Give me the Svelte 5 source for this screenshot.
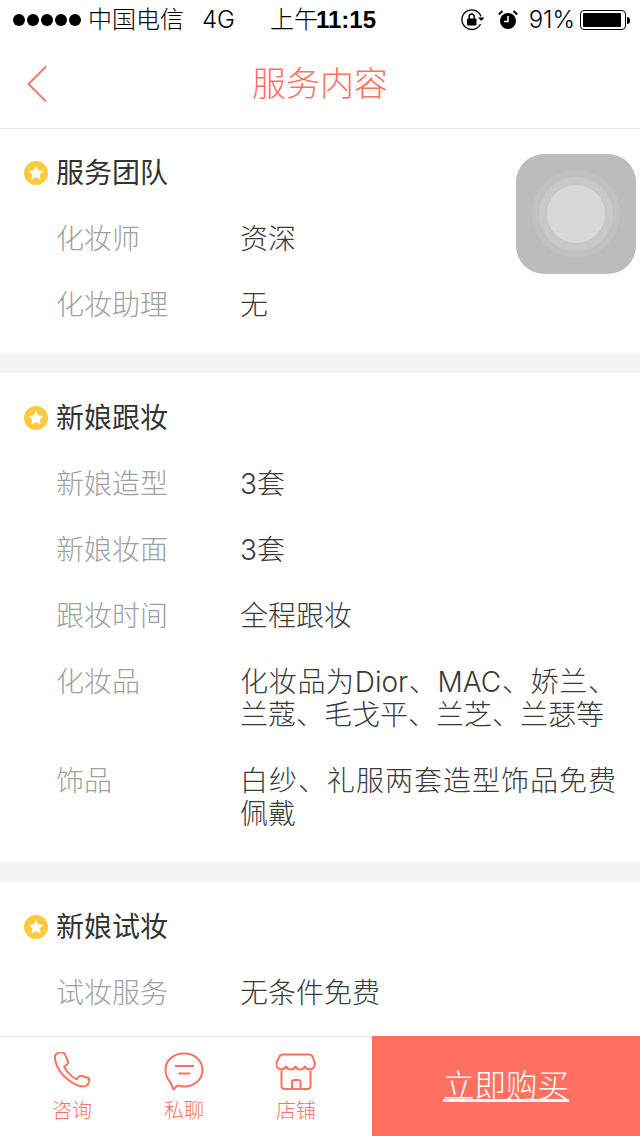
<script>
    const sections = [
        {
            title: '服务团队',
            rows: [
                { label: '化妆师', value: '资深' },
                { label: '化妆助理', value: '无' }
            ]
        },
        {
            title: '新娘跟妆',
            rows: [
                { label: '新娘造型', value: '3套' },
                { label: '新娘妆面', value: '3套' },
                { label: '跟妆时间', value: '全程跟妆' },
                { label: '化妆品', value: '化妆品为Dior、MAC、娇兰、兰蔻、毛戈平、兰芝、兰瑟等' },
                { label: '饰品', value: '白纱、礼服两套造型饰品免费佩戴' }
            ]
        },
        {
            title: '新娘试妆',
            rows: [
                { label: '试妆服务', value: '无条件免费' }
            ]
        }
    ];
</script>

<div class="page">
    <div class="status">
        <div class="dots">
            {#each [0, 1, 2, 3, 4] as d}
                <i></i>
            {/each}
        </div>
        <span class="carrier">中国电信</span>
        <span class="net">4G</span>
        <span class="time">上午<b>11:15</b></span>
        <div class="status-right">
            <svg class="lock" width="24" height="22" viewBox="0 0 24 22">
                <path d="M19.500 15A9.800 9.800 0 1 1 20 7.500" fill="none" stroke="#000" stroke-width="1.300" />
                <path d="M17 8.500h6.500l-3.200 3.600z" fill="#000" />
                <rect x="6" y="9.500" width="9.500" height="7" rx="1" fill="#000" />
                <path d="M8.200 10V7.500a2.500 2.500 0 0 1 5 0V10" fill="none" stroke="#000" stroke-width="1.500" />
            </svg>
            <svg class="alarm" width="20" height="20" viewBox="0 0 20 20">
                <circle cx="10" cy="11" r="8" fill="#000" />
                <path d="M10 6v5.500H6" fill="none" stroke="#fff" stroke-width="1.600" />
                <path d="M0.800 4.500 4.500 1M19.200 4.500 15.500 1" stroke="#000" stroke-width="2" fill="none" />
            </svg>
            <span class="pct">91%</span>
            <div class="battery"><b></b></div>
            <div class="nub"></div>
        </div>
    </div>

    <header class="nav">
        <svg class="back" width="22" height="38" viewBox="0 0 22 38">
            <path d="M20 1.500 2.500 19 20 36.500" fill="none" stroke="#ff7060" stroke-width="1.800" />
        </svg>
        <h1>服务内容</h1>
    </header>

    {#each sections as s}
        <section>
            <div class="title">
                <svg width="24" height="24" viewBox="0 0 24 24">
                    <circle cx="12" cy="12" r="12" fill="#ffc93c" />
                    <path d="M12 5.500l2 4.300 4.700.5-3.500 3.200 1 4.600-4.200-2.400-4.200 2.400 1-4.600-3.500-3.200 4.700-.5z" fill="#fff" stroke="#fff" stroke-width="0.800" stroke-linejoin="round" />
                </svg>
                <h2>{s.title}</h2>
            </div>
            {#each s.rows as r}
                <div class="row">
                    <span class="label">{r.label}</span>
                    <span class="value">{r.value}</span>
                </div>
            {/each}
        </section>
    {/each}

    <div class="touch">
        <div class="ring3"><div class="ring2"><div class="ring1"></div></div></div>
    </div>

    <footer>
        <div class="tab">
            <svg width="40" height="40" viewBox="0 2 40 40">
                <path d="M7 2.500c-2.800 1-4.800 3.600-4 7.200 1.500 7 6.500 14.500 12.500 19.500 5 4 10.500 7 16 7.300 3 .1 5-2.500 5.700-5.200.5-2-.5-3.300-2.300-3.800l-5-1.500c-1.500-.4-2.700.2-3.500 1.200l-1.700 2c-4.500-1.500-10.500-7.800-12.500-12.700l2.800-2c1-.8 1.300-1.800.9-3L13.500 5.500C12.500 2.500 9.500 1.600 7 2.500z" fill="none" stroke="#ff7060" stroke-width="2" stroke-linejoin="round" />
            </svg>
            <span>咨询</span>
        </div>
        <div class="tab">
            <svg width="40" height="40" viewBox="0 0 40 40">
                <path d="M20 1.500C9.500 1.500 1.500 8.500 1.500 17.500c0 5 1.500 9 4.500 12l3.500 8 4-4c2 .5 4 1 6.500 1 10.500 0 18.500-7 18.500-16.500S30.500 1.500 20 1.500z" fill="none" stroke="#ff7060" stroke-width="2" stroke-linejoin="round" />
                <path d="M11 14h19M14.500 21.500h12" fill="none" stroke="#ff7060" stroke-width="2" />
            </svg>
            <span>私聊</span>
        </div>
        <div class="tab">
            <svg width="40" height="40" viewBox="0 0 40 40">
                <path d="M7 2.500h26c2.500 0 3.500 1.500 4 3l1.500 5c1 3.500-1 7-4.500 7-2.500 0-4-1-5-3-1 2-3 3-5 3s-3.500-1-4.500-3c-1 2-2.500 3-4.500 3s-4-1-5-3c-1 2-2.500 3-5 3-3.500 0-5.500-3.500-4.500-7L3 5.500c.5-1.500 1.500-3 4-3z" fill="none" stroke="#ff7060" stroke-width="2" stroke-linejoin="round" />
                <path d="M5.500 18.500v15.500c0 2 1 3 3 3h23c2 0 3-1 3-3V18.500" fill="none" stroke="#ff7060" stroke-width="2" />
                <path d="M16 37V30c0-1.300.8-2 2-2h4.500c1.200 0 2 .7 2 2v7" fill="none" stroke="#ff7060" stroke-width="2" />
            </svg>
            <span>店铺</span>
        </div>
        <div class="buy">立即购买</div>
    </footer>
</div>

<style>
    :global(body) {
        margin: 0;
        background: #fff;
    }

    .page {
        position: relative;
        width: 640px;
        height: 1136px;
        overflow: hidden;
        background: #fff;
        font-family: "Inter", "Noto Sans CJK SC", sans-serif;
    }

    .status {
        height: 40px;
        display: flex;
        align-items: center;
        padding-left: 13px;
        color: #000;
        font-size: 24px;
        line-height: 28px;
    }

    .dots {
        display: flex;
        gap: 2px;
    }

    .dots i {
        width: 12px;
        height: 12px;
        border-radius: 50%;
        background: #000;
    }

    .carrier {
        margin-left: 7px;
        font-weight: 300;
    }

    .net {
        margin-left: 18px;
        font-weight: 300;
    }

    .time {
        margin-left: 35px;
        font-weight: 300;
    }

    .time b {
        margin-left: -2px;
        font-family: "Liberation Sans", sans-serif;
        font-weight: 700;
    }

    .status-right {
        position: absolute;
        right: 10px;
        top: 0;
        height: 40px;
        display: flex;
        align-items: center;
    }

    .alarm {
        margin-left: 13px;
    }

    .pct {
        margin-left: 11px;
        font-weight: 300;
    }

    .battery {
        margin-left: 5px;
        width: 46px;
        height: 20px;
        box-sizing: border-box;
        border: 1px solid #000;
        border-radius: 4px;
        padding: 2px;
    }

    .battery b {
        display: block;
        width: 38px;
        height: 14px;
        background: #000;
        border-radius: 1px;
    }

    .nub {
        width: 3px;
        height: 7px;
        margin-left: 1px;
        background: #000;
        border-radius: 0 3px 3px 0;
    }

    .nav {
        height: 88px;
        display: flex;
        align-items: center;
        justify-content: center;
        position: relative;
        border-bottom: 1px solid #e5e5e5;
    }

    .back {
        position: absolute;
        left: 26px;
        top: 25px;
    }

    h1 {
        margin: 0;
        font-size: 34px;
        line-height: 40px;
        font-weight: 300;
        color: #ff7060;
    }

    section {
        padding: 23px 0 15px;
        border-bottom: 20px solid #f4f4f4;
    }

    section:first-of-type {
        padding-top: 22px;
    }

    section:last-of-type {
        border-bottom: 0;
    }

    .title {
        height: 44px;
        display: flex;
        align-items: center;
        padding-left: 24px;
        gap: 8px;
        margin-bottom: 11px;
    }

    h2 {
        margin: 0;
        font-size: 28px;
        line-height: 33px;
        font-weight: 400;
        color: #333;
    }

    .row {
        display: flex;
        padding: 16.500px 24px 16.500px 56px;
        font-size: 28px;
        line-height: 33px;
    }

    .label {
        flex: 0 0 184px;
        color: #a0a0a0;
        font-weight: 300;
    }

    .value {
        flex: 1;
        color: #3a3a3a;
        font-weight: 300;
        text-align: justify;
    }

    .touch {
        position: absolute;
        left: 516px;
        top: 154px;
        width: 120px;
        height: 120px;
        border-radius: 28px;
        background: #bcbcbc;
        display: flex;
        align-items: center;
        justify-content: center;
    }

    .ring3 {
        width: 88px;
        height: 88px;
        border-radius: 50%;
        background: #c1c1c1;
        display: flex;
        align-items: center;
        justify-content: center;
    }

    .ring2 {
        width: 74px;
        height: 74px;
        border-radius: 50%;
        background: #c8c8c8;
        display: flex;
        align-items: center;
        justify-content: center;
    }

    .ring1 {
        width: 58px;
        height: 58px;
        border-radius: 50%;
        background: #d8d8d8;
    }

    footer {
        position: absolute;
        left: 0;
        right: 0;
        bottom: 0;
        height: 100px;
        box-sizing: border-box;
        border-top: 1px solid #e5e5e5;
        background: #fff;
        display: flex;
    }

    .tab {
        width: 112px;
        padding-top: 15px;
        display: flex;
        flex-direction: column;
        align-items: center;
        color: #ff7060;
        font-size: 20px;
        font-weight: 300;
        line-height: 30px;
    }

    .tab span {
        margin-top: 4px;
    }

    .tab:first-child {
        margin-left: 16px;
    }

    .buy {
        position: absolute;
        right: 0;
        top: -1px;
        width: 268px;
        height: 100px;
        background: #ff7060;
        color: #fff;
        font-size: 31.500px;
        line-height: 40px;
        font-weight: 300;
        text-decoration: underline;
        display: flex;
        align-items: center;
        justify-content: center;
    }
</style>
